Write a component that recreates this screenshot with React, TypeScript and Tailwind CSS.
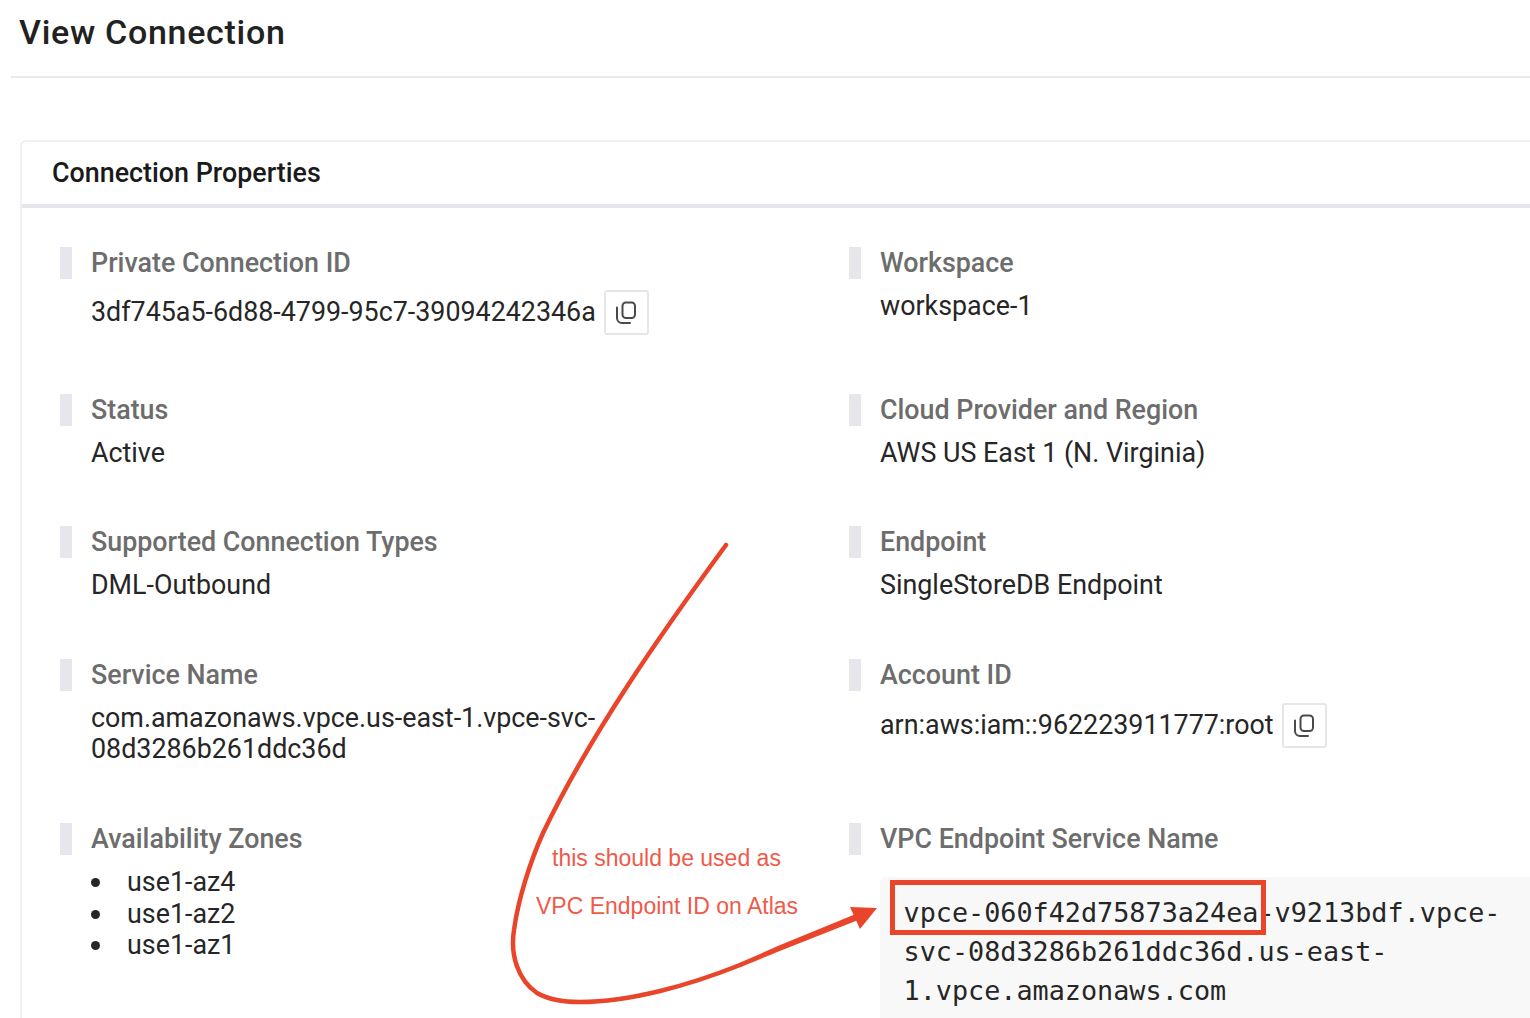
import React from 'react';

function CopyButton() {
  return (
    <button className="flex h-[45px] w-[45px] shrink-0 items-center justify-center rounded-[3px] border-2 border-[#e6e6e6] bg-white">
      <svg width="24" height="24" viewBox="0 0 24 24" fill="none" stroke="#4a4a4a" strokeWidth="2">
        <rect x="8.5" y="1.5" width="12.5" height="15.5" rx="3.5" />
        <path d="M3 6.5 V17 a5 5 0 0 0 5 5 H16" strokeLinecap="round" />
      </svg>
    </button>
  );
}

function Field({ label, children }: { label: string; children: React.ReactNode }) {
  return (
    <div>
      <div className="flex h-8 items-center border-l-12 border-[#e6e6ec] pl-[19px] text-[26.85px] font-medium text-[#6d6d6d]">{label}</div>
      <div className="mt-3 pl-[31px] text-[26.85px] leading-[31px] text-[#262626]">{children}</div>
    </div>
  );
}

function Zone({ name }: { name: string }) {
  return (
    <li className="flex h-[31.5px] items-center gap-[27px]">
      <span className="h-[9px] w-[9px] rounded-full bg-[#262626]" />
      {name}
    </li>
  );
}

export default function App() {
  return (
    <div className="relative h-[1018px] w-[1530px] overflow-hidden bg-white font-['Roboto',sans-serif]">
      <div className="ml-[11px] h-[78px] border-b-2 border-[#e9e9ee] pl-[8px] pt-[10px] text-[34px] leading-[44px] font-medium tracking-[0.7px] text-[#222222]">
        View Connection
      </div>

      <div className="mt-[62px] ml-5 h-[900px] rounded-tl-md border-t-2 border-l-2 border-[#f0f0f3]">
        <div className="h-[66px] border-b-4 border-[#e6e6ec] pl-[30px] pt-[14px] text-[26.85px] leading-[34px] font-medium text-[#1a1a1a]">
          Connection Properties
        </div>

        <div className="grid grid-cols-[789px_1fr] gap-y-[57.7px] pl-[38px] pt-[39px]">
          <Field label="Private Connection ID">
            <div className="-mt-px mb-px flex items-center gap-2">
              <span>3df745a5-6d88-4799-95c7-39094242346a</span>
              <CopyButton />
            </div>
          </Field>
          <Field label="Workspace">workspace-1</Field>

          <Field label="Status">Active</Field>
          <Field label="Cloud Provider and Region">AWS US East 1 (N. Virginia)</Field>

          <Field label="Supported Connection Types">DML-Outbound</Field>
          <Field label="Endpoint">SingleStoreDB Endpoint</Field>

          <Field label="Service Name">
            com.amazonaws.vpce.us-east-1.vpce-svc-
            <br />
            08d3286b261ddc36d
          </Field>
          <Field label="Account ID">
            <div className="flex items-center gap-2">
              <span>arn:aws:iam::962223911777:root</span>
              <CopyButton />
            </div>
          </Field>

          <Field label="Availability Zones">
            <ul>
              <Zone name="use1-az4" />
              <Zone name="use1-az2" />
              <Zone name="use1-az1" />
            </ul>
          </Field>
          <div>
            <div className="flex h-8 items-center border-l-12 border-[#e6e6ec] pl-[19px] text-[26.85px] font-medium text-[#6d6d6d]">
              VPC Endpoint Service Name
            </div>
            <div className="mt-[22px] ml-[31px] h-[200px] rounded-tl-md bg-[#f8f8f8] pl-[23.5px] pt-4 font-['DejaVu_Sans_Mono',monospace] text-[26.8px] leading-[39px] text-[#262626]">
              vpce-060f42d75873a24ea-v9213bdf.vpce-
              <br />
              svc-08d3286b261ddc36d.us-east-
              <br />
              1.vpce.amazonaws.com
            </div>
          </div>
        </div>
      </div>

      {/* annotation drawn over the screenshot */}
      <div className="absolute top-[880px] left-[890px] h-[55px] w-[376px] border-[5px] border-[#e8452a]" />
      <div className="absolute top-[844px] left-[552px] font-['Liberation_Sans',sans-serif] text-[23px] leading-[28px] text-[#ef5a49]">
        this should be used as
      </div>
      <div className="absolute top-[892px] left-[536px] font-['Liberation_Sans',sans-serif] text-[23px] leading-[28px] text-[#ef5a49]">
        VPC Endpoint ID on Atlas
      </div>
      <svg className="absolute top-0 left-0" width="1530" height="1018" viewBox="0 0 1530 1018" fill="none">
        <path
          d="M726 545 C660 635 590 735 543 833 C530 862 518 900 514 930 C510 955 518 980 537 993 C549 1000 563 1002 580 1002 C630 1002 690 985 740 965"
          stroke="#e8452a"
          strokeWidth="4.5"
          strokeLinecap="round"
        />
        <path
          d="M739.1 962.9 Q760 954 779 945.6 L855.8 914 L858.2 920 L781 950.4 Q760 959 740.9 967.1 Z"
          fill="#e8452a"
        />
        <path d="M877 908 L850 907 L860 929 Z" fill="#e8452a" />
      </svg>
    </div>
  );
}
